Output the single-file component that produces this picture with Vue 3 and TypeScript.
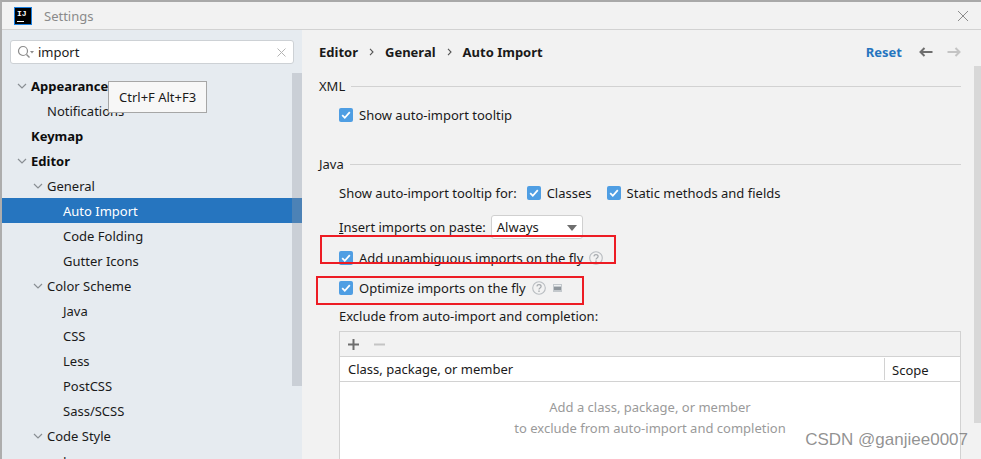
<template>
  <div class="dialog">
    <header class="title-bar">
      <span class="logo"><span class="logo-text">IJ</span><i></i></span>
      <span class="title">Settings</span>
      <svg class="close" width="12" height="12" viewBox="0 0 12 12"><path d="M1 1l10 10M11 1L1 11" stroke="#8c8c8c" fill="none" /></svg>
    </header>
    <div class="body">
      <aside class="sidebar">
        <div class="search">
          <svg class="search-icon" width="18" height="14" viewBox="0 0 18 14">
            <circle cx="6" cy="6" r="4.5" fill="none" stroke="#8c8c8c" stroke-width="1.2" />
            <path d="M9.5 9.5l3 3" stroke="#8c8c8c" stroke-width="1.4" />
            <path d="M13 6h4l-2 2.5z" fill="#8c8c8c" />
          </svg>
          <span class="search-text">import</span>
          <svg class="search-clear" width="9" height="9" viewBox="0 0 9 9"><path d="M.5.5l8 8M8.5.5l-8 8" stroke="#b4b4b4" fill="none" /></svg>
        </div>
        <ul class="tree">
          <li
            v-for="row in rows"
            :key="row.label"
            class="tree-row"
            :class="{ bold: row.bold, selected: row.selected }"
            :style="{ paddingLeft: 15 + row.level * 16 + 'px' }"
          >
            <svg v-if="row.open" class="chevron" width="10" height="6" viewBox="0 0 10 6"><path d="M1 1l4 4 4-4" fill="none" stroke="#8a8f94" stroke-width="1.2" /></svg>
            <span v-else class="chevron-gap"></span>
            <span class="tree-label">{{ row.label }}</span>
          </li>
        </ul>
        <div class="tree-scroll"></div>
        <div class="tooltip">Ctrl+F Alt+F3</div>
      </aside>
      <main class="content">
        <div class="crumbs">
          <b>Editor</b>
          <svg width="5" height="8" viewBox="0 0 5 8"><path d="M1 .8L4 4 1 7.2" fill="none" stroke="#555" stroke-width="1.1" /></svg>
          <b>General</b>
          <svg width="5" height="8" viewBox="0 0 5 8"><path d="M1 .8L4 4 1 7.2" fill="none" stroke="#555" stroke-width="1.1" /></svg>
          <b>Auto Import</b>
          <span class="spacer"></span>
          <b class="reset">Reset</b>
          <svg class="nav" width="14" height="10" viewBox="0 0 14 10"><path d="M5.5 1L1.5 5l4 4M2 5h11.5" fill="none" stroke="#6e6e6e" stroke-width="2" /></svg>
          <svg class="nav" width="14" height="10" viewBox="0 0 14 10"><path d="M8.5 1l4 4-4 4M12 5H.5" fill="none" stroke="#c4c4c4" stroke-width="2" /></svg>
        </div>

        <div class="group xml"><span>XML</span><i></i></div>
        <div class="row first"><label class="check"><svg width="14" height="14" viewBox="0 0 14 14"><use href="#tick" /></svg>Show auto-import tooltip</label></div>

        <div class="group java"><span>Java</span><i></i></div>
        <div class="row for">
          <span>Show auto-import tooltip for:</span>
          <label class="check"><svg width="14" height="14" viewBox="0 0 14 14"><use href="#tick" /></svg>Classes</label>
          <label class="check"><svg width="14" height="14" viewBox="0 0 14 14"><use href="#tick" /></svg>Static methods and fields</label>
        </div>
        <div class="row paste">
          <span><u>I</u>nsert imports on paste:</span>
          <div class="select">Always<i></i></div>
        </div>
        <div class="row add">
          <label class="check"><svg width="14" height="14" viewBox="0 0 14 14"><use href="#tick" /></svg>Add unambiguous imports on the fly</label>
          <svg class="help" width="14" height="14" viewBox="0 0 14 14"><use href="#help" /></svg>
        </div>
        <div class="row optimize">
          <label class="check"><svg width="14" height="14" viewBox="0 0 14 14"><use href="#tick" /></svg>Optimize imports on the fly</label>
          <svg class="help" width="14" height="14" viewBox="0 0 14 14"><use href="#help" /></svg>
          <svg class="note" width="9" height="8" viewBox="0 0 9 8"><rect width="9" height="8" fill="#c3c8cc" /><rect x="1" y="1" width="7" height="1" fill="#eef0f1" /><rect x="1" y="3" width="7" height="3" fill="#8f969c" /></svg>
        </div>
        <div class="row exclude">Exclude from auto-import and completion:</div>

        <section class="table">
          <div class="toolbar">
            <svg width="11" height="11" viewBox="0 0 11 11"><path d="M5.5 0v11M0 5.5h11" stroke="#6e6e6e" stroke-width="2" /></svg>
            <svg width="11" height="11" viewBox="0 0 11 11"><path d="M0 5.5h11" stroke="#c4c4c4" stroke-width="2" /></svg>
          </div>
          <div class="thead">
            <span class="col-name">Class, package, or member</span>
            <span class="col-scope">Scope</span>
          </div>
          <div class="empty">
            <p>Add a class, package, or member</p>
            <p>to exclude from auto-import and completion</p>
          </div>
        </section>
      </main>
      <div class="main-scroll"></div>
    </div>

    <div class="mark mark-add"></div>
    <div class="mark mark-optimize"></div>
    <div class="watermark">CSDN @ganjiee0007</div>

    <svg width="0" height="0" class="defs">
      <symbol id="tick" viewBox="0 0 14 14">
        <rect width="14" height="14" rx="2" fill="#4f9ee3" />
        <path d="M3.2 7.2l2.6 2.6 5-5.6" fill="none" stroke="#fff" stroke-width="1.8" />
      </symbol>
      <symbol id="help" viewBox="0 0 14 14">
        <circle cx="7" cy="7" r="6.3" fill="none" stroke="#b9bdc1" stroke-width="1.1" />
        <path d="M4.9 5.4C5 4.1 6 3.6 7 3.6c1.2 0 2.1.7 2.1 1.8 0 1.500-2.100 1.500-2.100 3.100" fill="none" stroke="#a5a9ad" stroke-width="1.2" />
        <rect x="6.300" y="9.500" width="1.400" height="1.400" fill="#a5a9ad" />
      </symbol>
    </svg>
  </div>
</template>

<script setup lang="ts">
interface TreeRow {
  label: string
  level: number
  open?: boolean
  bold?: boolean
  selected?: boolean
}

const rows: TreeRow[] = [
  { label: 'Appearance & Behavior', level: 0, open: true, bold: true },
  { label: 'Notifications', level: 1 },
  { label: 'Keymap', level: 0, bold: true },
  { label: 'Editor', level: 0, open: true, bold: true },
  { label: 'General', level: 1, open: true },
  { label: 'Auto Import', level: 2, selected: true },
  { label: 'Code Folding', level: 2 },
  { label: 'Gutter Icons', level: 2 },
  { label: 'Color Scheme', level: 1, open: true },
  { label: 'Java', level: 2 },
  { label: 'CSS', level: 2 },
  { label: 'Less', level: 2 },
  { label: 'PostCSS', level: 2 },
  { label: 'Sass/SCSS', level: 2 },
  { label: 'Code Style', level: 1, open: true },
  { label: 'Java', level: 2 }
]
</script>

<style>
html,
body {
  margin: 0;
  overflow: hidden;
  background: #f2f2f2;
}
</style>

<style scoped>
.dialog {
  position: relative;
  width: 981px;
  height: 459px;
  overflow: hidden;
  box-sizing: border-box;
  border-top: 2px solid #a9a9a9;
  border-left: 2px solid #adadad;
  background: #f2f2f2;
  color: #1a1a1a;
  font: 13px/18px "Noto Sans", "Open Sans", sans-serif;
}

.title-bar {
  display: flex;
  align-items: center;
  height: 28px;
  padding: 0 12px 0 12px;
  box-sizing: border-box;
  border-bottom: 1px solid #d2d2d2;
}

.logo {
  position: relative;
  width: 16px;
  height: 16px;
  background: #000;
  border: 1px solid #1a7fe0;
  color: #fff;
  box-sizing: content-box;
}

.logo-text {
  display: block;
  font: bold 8px/9px "Liberation Mono", monospace;
  padding: 1px 0 0 2px;
}

.logo i {
  position: absolute;
  left: 2px;
  bottom: 2px;
  width: 7px;
  height: 1px;
  background: #fff;
}

.title {
  margin-left: 12px;
  color: #8a8a8a;
}

.close {
  margin-left: auto;
  margin-right: 0;
}

.body {
  display: flex;
  height: 429px;
}

.sidebar {
  position: relative;
  flex: 0 0 300px;
  background: #e6ebf0;
  padding-top: 10px;
  box-sizing: border-box;
}

.search {
  display: flex;
  align-items: center;
  width: 284px;
  height: 24px;
  margin-left: 8px;
  padding: 0 7px 0 6px;
  box-sizing: border-box;
  background: #fff;
  border: 1px solid #cdd1d5;
  border-radius: 3px;
}

.search-text {
  margin-left: 3px;
}

.search-clear {
  margin-left: auto;
}

.tree {
  list-style: none;
  margin: 9px 0 0;
  padding: 0;
}

.tree-row {
  display: flex;
  align-items: center;
  height: 25px;
  box-sizing: border-box;
}

.tree-row.bold {
  font-weight: 700;
  color: #0d0d0d;
}

.tree-row.selected {
  background: #2675bf;
  color: #fff;
}

.chevron,
.chevron-gap {
  flex: none;
  width: 10px;
  margin-right: 4px;
}

.tree-scroll {
  position: absolute;
  right: 0;
  top: 43px;
  width: 10px;
  height: 313px;
  background: rgba(150, 155, 165, 0.35);
}

.tooltip {
  position: absolute;
  left: 106px;
  top: 51px;
  height: 32px;
  padding: 0 10px;
  line-height: 30px;
  box-sizing: border-box;
  background: #f7f7f7;
  border: 1px solid #a6a6a6;
}

.content {
  flex: 1;
  padding: 0 20px 0 17px;
  min-width: 0;
}

.crumbs {
  display: flex;
  align-items: center;
  gap: 11px;
  height: 18px;
  margin-top: 13px;
}

.crumbs b {
  font-weight: 700;
}

.spacer {
  flex: 1;
}

.crumbs .reset {
  color: #2675bf;
  margin-right: 3px;
}

.nav {
  margin-left: 3px;
}

.group {
  display: flex;
  align-items: center;
  gap: 6px;
  height: 18px;
}

.group i {
  flex: 1;
  height: 1px;
  background: #d2d2d2;
}

.group.xml {
  margin-top: 16px;
}

.group.java {
  margin-top: 31px;
}

.row {
  display: flex;
  align-items: center;
  height: 18px;
  margin-left: 20px;
  white-space: nowrap;
}

.row.first {
  margin-top: 11px;
}

.row.for {
  margin-top: 11px;
}

.row.paste {
  margin-top: 16px;
}

.row.add {
  margin-top: 13px;
}

.row.optimize {
  margin-top: 12px;
}

.row.exclude {
  margin-top: 10px;
}

.check {
  display: inline-flex;
  align-items: center;
  gap: 6px;
}

.for .check {
  margin-left: 10px;
}

.for .check + .check {
  margin-left: 15px;
}

.select {
  position: relative;
  width: 92px;
  height: 24px;
  margin-left: 5px;
  padding-left: 5px;
  line-height: 23px;
  box-sizing: border-box;
  background: #fff;
  border: 1px solid #d0d0d0;
  border-radius: 3px;
}

.select i {
  position: absolute;
  right: 5px;
  top: 9px;
  border: 5px solid transparent;
  border-top: 6px solid #6e6e6e;
  border-bottom: 0;
}

.help {
  margin-left: 6px;
}

.note {
  margin-left: 7px;
}

.table {
  margin: 6px 0 0 20px;
  border: 1px solid #d2d2d2;
  border-bottom: 0;
}

.toolbar {
  display: flex;
  align-items: center;
  gap: 15px;
  height: 24px;
  padding-left: 8px;
  border-bottom: 1px solid #d2d2d2;
}

.thead {
  display: flex;
  align-items: center;
  height: 24px;
  background: #fff;
  border-bottom: 1px solid #d2d2d2;
}

.col-name {
  flex: 1;
  padding-left: 8px;
}

.col-scope {
  width: 76px;
  height: 22px;
  line-height: 24px;
  padding-left: 7px;
  box-sizing: border-box;
  border-left: 1px solid #d2d2d2;
}

.empty {
  height: 90px;
  padding-top: 16px;
  box-sizing: border-box;
  background: #fff;
  text-align: center;
  color: #9a9a9a;
}

.empty p {
  margin: 0 0 3px;
}

.main-scroll {
  position: absolute;
  right: 0;
  top: 64px;
  width: 7px;
  height: 357px;
  background: #d8d8d8;
}

.mark {
  position: absolute;
  box-sizing: border-box;
  border: 2px solid #ed1c24;
}

.mark-add {
  left: 318px;
  top: 233px;
  width: 296px;
  height: 29px;
}

.mark-optimize {
  left: 314px;
  top: 274px;
  width: 268px;
  height: 29px;
}

.watermark {
  position: absolute;
  right: 13px;
  top: 428px;
  font: 17px/20px "Liberation Sans", sans-serif;
  color: rgba(110, 110, 110, 0.75);
}

.defs {
  position: absolute;
}
</style>
